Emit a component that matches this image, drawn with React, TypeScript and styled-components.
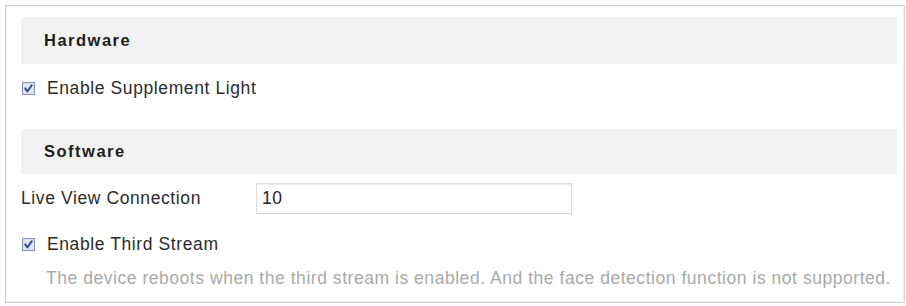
import React from "react";
import styled, { createGlobalStyle } from "styled-components";

const Global = createGlobalStyle`
  html, body { margin: 0; padding: 0; background: #ffffff; }
  body { font-family: "Liberation Sans", Arial, sans-serif; }
`;

const Page = styled.div`
  width: 906px;
  height: 306px;
  padding: 5px 1px 3px 5px;
  box-sizing: border-box;
  background: #fff;
`;

const Panel = styled.div`
  height: 100%;
  box-sizing: border-box;
  border: 1px solid #d3d3d3;
  box-shadow: inset 0 0 0 1px #f0f0f0;
  padding: 11px 7px 0 15px;
  display: flex;
  flex-direction: column;
`;

const SectionHeader = styled.div<{ $h: number; $mt?: number }>`
  height: ${(p) => p.$h}px;
  margin-top: ${(p) => p.$mt ?? 0}px;
  background: #f2f2f2;
  display: flex;
  align-items: center;
  padding-left: 23px;
  font-weight: bold;
  font-size: 16.5px;
  letter-spacing: 1.5px;
  color: #1e1e1e;
`;

const Row = styled.div<{ $h: number }>`
  height: ${(p) => p.$h}px;
  display: flex;
  align-items: center;
  padding-left: 1px;
  font-size: 17.5px;
  letter-spacing: 0.6px;
  color: #2c2c2c;
`;

const CheckLabel = styled.span`
  margin-left: 12px;
`;

const FieldLabel = styled.span`
  width: 235px;
  flex: none;
  margin-left: -1px;
`;

const Input = styled.div`
  width: 316px;
  height: 31px;
  box-sizing: border-box;
  border: 1px solid #d9d9d9;
  box-shadow: inset 0 1px 1px #eeeeee;
  display: flex;
  align-items: center;
  padding-left: 5px;
  font-size: 17.5px;
  letter-spacing: 0.6px;
  color: #222;
`;

const Note = styled.div`
  height: 24px;
  display: flex;
  align-items: center;
  padding-left: 25px;
  font-size: 17.5px;
  letter-spacing: 0.54px;
  color: #a9a9a9;
  white-space: nowrap;
`;

const CheckBox = () => (
  <svg width="13" height="13" viewBox="0 0 13 13" style={{ flex: "none" }}>
    <rect x="0.5" y="0.5" width="12" height="12" fill="#d9dfeb" stroke="#8593b0" />
    <rect x="1.5" y="1.5" width="10" height="10" fill="#e2e7f1" />
    <path d="M3.2 6.4 L5.4 9.4 L9.8 3.2" fill="none" stroke="#3550a0" strokeWidth="2" strokeLinecap="round" strokeLinejoin="round" />
  </svg>
);

export default function App() {
  return (
    <>
      <Global />
      <Page>
        <Panel>
          <SectionHeader $h={47}>Hardware</SectionHeader>
          <Row $h={48}>
            <CheckBox />
            <CheckLabel>Enable Supplement Light</CheckLabel>
          </Row>
          <SectionHeader $h={45} $mt={17}>Software</SectionHeader>
          <Row $h={48}>
            <FieldLabel>Live View Connection</FieldLabel>
            <Input>10</Input>
          </Row>
          <Row $h={44}>
            <CheckBox />
            <CheckLabel>Enable Third Stream</CheckLabel>
          </Row>
          <Note>
            The device reboots when the third stream is enabled. And the face detection function is not supported.
          </Note>
        </Panel>
      </Page>
    </>
  );
}
